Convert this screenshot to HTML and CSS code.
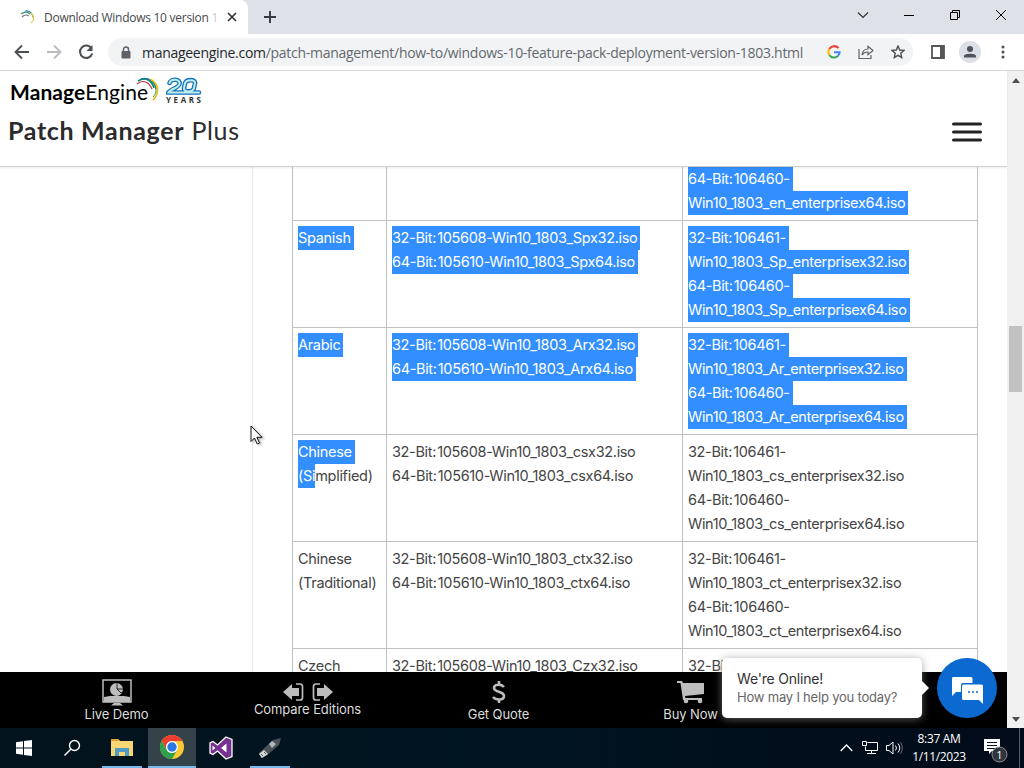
FILE: index.html
```html
<!DOCTYPE html>
<html lang="en">
<head>
    <meta charset="UTF-8">
    <title>Download Windows 10 version 1</title>
    <link rel="stylesheet" href="styles.css">
</head>
<body>
    <!-- TAB STRIP -->
    <div class="tabs">
        <div class="tab">
            <svg width="16" height="16" viewBox="0 0 16 16" fill="none" stroke-width="1.2"><path d="M1 5c4-3 7-2 9 0" stroke="#388e75"/><path d="M2 8c3-3 5-2 7-1" stroke="#777"/><path d="M5 2c5-1 7 2 8 6" stroke="#2c8a91"/><path d="M11 4c4 4 3 8 0 10" stroke="#e5cb43"/></svg>
            <span class="tab-title">Download Windows 10 version <i>1</i></span>
            <svg class="tab-close" width="10" height="10" viewBox="0 0 10 10" stroke="#333" stroke-width="1.7"><path d="M1 1l8 8M9 1l-8 8"/></svg>
        </div>
        <svg class="new-tab" width="12" height="12" viewBox="0 0 12 12" stroke="#333a44" stroke-width="1.9"><path d="M6 0v12M0 6h12"/></svg>
        <div class="window-buttons">
            <svg width="12" height="12" viewBox="0 0 12 12" fill="none" stroke="#333" stroke-width="1.2"><path d="M1 3.500l5 5 5-5"/></svg>
            <svg width="12" height="12" viewBox="0 0 12 12" fill="none" stroke="#000"><path d="M1 6.500h10"/></svg>
            <svg width="12" height="12" viewBox="0 0 12 12" fill="none" stroke="#000"><path d="M1.500 3.500h7v7h-7zM3.500 3v-1.500h7v7h-1.500"/></svg>
            <svg width="12" height="12" viewBox="0 0 12 12" fill="none" stroke="#000"><path d="M1 1l10 10M11 1L1 11"/></svg>
        </div>
    </div>

    <!-- TOOLBAR -->
    <div class="toolbar">
        <svg width="16" height="16" viewBox="0 0 16 16" fill="none" stroke="#4b4e52" stroke-width="1.800"><path d="M15 8H2M8 1.500L1.500 8 8 14.500"/></svg>
        <svg class="forward" width="16" height="16" viewBox="0 0 16 16" fill="none" stroke="#b9bbbe" stroke-width="1.800"><path d="M1 8h13M8 1.500L14.500 8 8 14.500"/></svg>
        <svg class="reload" width="16" height="16" viewBox="0 0 16 16" fill="none" stroke="#4b4e52" stroke-width="2"><path d="M13.500 4.500A6.200 6.200 0 1 0 14.200 9.500"/><path d="M14.500 1v6h-6z" fill="#4b4e52" stroke="none"/></svg>
        <div class="address">
            <svg width="10" height="13" viewBox="0 0 10 13"><path d="M2.500 6V3.500a2.500 2.500 0 0 1 5 0V6" fill="none" stroke="#5f6368" stroke-width="1.500"/><rect x="0.500" y="5" width="9" height="7.500" rx="1" fill="#5f6368"/></svg>
            <span class="url"><b>manageengine.com</b>/patch-management/how-to/windows-10-feature-pack-deployment-version-1803.html</span>
            <div class="address-icons">
                <svg width="14" height="14" viewBox="0 0 14 14" fill="none" stroke-width="2.100"><path d="M11.500 3.200A5.600 5.600 0 0 0 2.300 4" stroke="#ea4335"/><path d="M2.300 4a5.600 5.600 0 0 0 0 6" stroke="#fbbc05"/><path d="M2.300 10a5.600 5.600 0 0 0 8.500 1" stroke="#34a853"/><path d="M10.800 11q2-1.700 1.800-3.800H7" stroke="#4285f4"/></svg>
                <svg width="16" height="16" viewBox="0 0 16 16" fill="none" stroke="#5f6368" stroke-width="1.200"><path d="M1 5v9.500h12V11M4 11c.5-4 2.500-6 6-6V2.200l5 4.300-5 4.200V8c-2.500 0-4.500.8-6 3z"/></svg>
                <svg width="14" height="14" viewBox="0 0 14 14" fill="none" stroke="#4b4e52" stroke-width="1.400"><path d="M7 1l1.700 4 4.300.4-3.200 2.900.9 4.300L7 10.400l-3.700 2.200.9-4.300L1 5.400 5.300 5z"/></svg>
            </div>
        </div>
        <svg class="panel-icon" width="14" height="14" viewBox="0 0 14 14"><path d="M1 1h12v12H1z" fill="none" stroke="#55565a" stroke-width="1.800"/><path d="M9 1h4v12H9z" fill="#55565a"/></svg>
        <svg class="avatar" width="22" height="22" viewBox="0 0 22 22"><circle cx="11" cy="11" r="11" fill="#dcdfe6"/><circle cx="11" cy="8" r="3" fill="#4f545c"/><path d="M5 16.500v-1.500c0-3 12-3 12 0v1.500z" fill="#4f545c"/></svg>
        <svg width="4" height="14" viewBox="0 0 4 14" fill="#4b4e52"><circle cx="2" cy="2" r="1.500"/><circle cx="2" cy="7" r="1.500"/><circle cx="2" cy="12" r="1.500"/></svg>
    </div>

    <!-- WEB PAGE -->
    <div class="viewport">
        <div class="page">
            <header class="site-header">
                <div class="logo-row">
                    <span class="brand"><b>Manage</b>Engine</span>
                    <svg class="swoosh" width="24" height="24" viewBox="0 0 24 24" fill="none" stroke-width="1.600"><path d="M1 7C7 2 13 5 16 12" stroke="#c02b43" stroke-width="1.200"/><path d="M2 4C10-1 16 4 18 11" stroke="#16835c"/><path d="M5 2c8-2 14 3 15 10" stroke="#1678a5"/><path d="M14 2c10 5 9 15 3 21" stroke="#e4c51c" stroke-width="1.800"/><path d="M17 5c4 6 4 11 0 15" stroke="#3b9c57" stroke-width="1"/></svg>
                    <svg class="twenty" width="36" height="29" viewBox="0 0 36 29"><g fill="none" stroke-linecap="round"><path d="M3.500 6C4.500 1.500 15 1.500 13.500 7c-1 4-9 5-11 8.500H33M18 11l1-4.500C20 2 30 2 29 6.500l-1 4.500c-1 4.500-11 4.500-10 0z" stroke="#1674bd" stroke-width="4.600"/><path d="M3.500 6C4.500 1.500 15 1.500 13.500 7c-1 4-9 5-11 8.500H33M18 11l1-4.500C20 2 30 2 29 6.500l-1 4.500c-1 4.500-11 4.500-10 0z" stroke="#bfeef0" stroke-width="2"/></g><text class="years" x="0" y="25.500" textLength="35">YEARS</text></svg>
                </div>
                <div class="product-row">
                    <h1><b>Patch Manager</b> Plus</h1>
                    <svg width="30" height="20" viewBox="0 0 30 20" stroke="#222" stroke-width="3" stroke-linecap="round"><path d="M1.500 2h27M1.500 10h27M1.500 18h27"/></svg>
                </div>
            </header>

            <main class="content">
                <div class="side"></div>
                <table>
                    <tr>
                        <td></td>
                        <td></td>
                        <td class="continued"><p><mark>64-Bit: 106460-</mark></p><p><mark>Win10_1803_en_enterprisex64.iso</mark></p></td>
                    </tr>
                    <tr>
                        <td><p><mark>Spanish</mark></p></td>
                        <td><p><mark>32-Bit: 105608-Win10_1803_Spx32.iso</mark></p><p><mark>64-Bit: 105610-Win10_1803_Spx64.iso</mark></p></td>
                        <td><p><mark>32-Bit: 106461-</mark></p><p><mark>Win10_1803_Sp_enterprisex32.iso</mark></p><p><mark>64-Bit: 106460-</mark></p><p><mark>Win10_1803_Sp_enterprisex64.iso</mark></p></td>
                    </tr>
                    <tr>
                        <td><p><mark>Arabic</mark></p></td>
                        <td><p><mark>32-Bit: 105608-Win10_1803_Arx32.iso</mark></p><p><mark>64-Bit: 105610-Win10_1803_Arx64.iso</mark></p></td>
                        <td><p><mark>32-Bit: 106461-</mark></p><p><mark>Win10_1803_Ar_enterprisex32.iso</mark></p><p><mark>64-Bit: 106460-</mark></p><p><mark>Win10_1803_Ar_enterprisex64.iso</mark></p></td>
                    </tr>
                    <tr>
                        <td><p><mark>Chinese</mark></p><p><mark class="partial">(Si</mark>mplified)</p></td>
                        <td><p>32-Bit: 105608-Win10_1803_csx32.iso</p><p>64-Bit: 105610-Win10_1803_csx64.iso</p></td>
                        <td><p>32-Bit: 106461-</p><p>Win10_1803_cs_enterprisex32.iso</p><p>64-Bit: 106460-</p><p>Win10_1803_cs_enterprisex64.iso</p></td>
                    </tr>
                    <tr>
                        <td><p>Chinese</p><p>(Traditional)</p></td>
                        <td><p>32-Bit: 105608-Win10_1803_ctx32.iso</p><p>64-Bit: 105610-Win10_1803_ctx64.iso</p></td>
                        <td><p>32-Bit: 106461-</p><p>Win10_1803_ct_enterprisex32.iso</p><p>64-Bit: 106460-</p><p>Win10_1803_ct_enterprisex64.iso</p></td>
                    </tr>
                    <tr>
                        <td><p>Czech</p></td>
                        <td><p>32-Bit: 105608-Win10_1803_Czx32.iso</p></td>
                        <td><p>32-Bit</p></td>
                    </tr>
                </table>
            </main>

            <nav class="bottom-bar">
                <a class="live">
                    <svg width="30" height="27" viewBox="0 0 30 27"><path d="M1 1h28v22H1z" fill="none" stroke="#bdbdbd" stroke-width="1.500"/><path d="M2 18l6-1h14l6 1v5H2zM12 24h6l3 2.500H9z" fill="#bdbdbd"/><circle cx="14.500" cy="10.500" r="6.500" fill="#bdbdbd"/><path d="M15 3v7l4 4 2-1M15 10h7" fill="none" stroke="#000" stroke-width=".8"/></svg>
                    <span>Live Demo</span>
                </a>
                <a class="compare">
                    <svg width="50" height="20" viewBox="0 0 50 20" fill="#bdbdbd"><path d="M0 10l9-8v4h7v8H9v4zM50 10l-9-8v4h-7v8h7v4z"/><path d="M13 2h4q2.500 0 2.500 2.500v11Q19.500 18 17 18h-4M37 2h-4q-2.500 0-2.500 2.500v11Q30.500 18 33 18h4" fill="none" stroke="#bdbdbd" stroke-width="1.700"/></svg>
                    <span>Compare Editions</span>
                </a>
                <a class="quote">
                    <svg width="14" height="24" viewBox="0 0 14 24" fill="none" stroke="#bdbdbd" stroke-width="2.600"><path d="M12 7C9 3.500 2 4 2 8c0 4.500 10 3 10 8 0 4.500-8 4.500-11 1M7 1v4M7 19v4"/></svg>
                    <span>Get Quote</span>
                </a>
                <a class="buy">
                    <svg width="28" height="24" viewBox="0 0 28 24" fill="#bdbdbd"><path d="M0 1h5l1 2h21v11L8 16l.5 2H25v2H6L3.500 3H0z"/><circle cx="9" cy="21" r="2.300"/><circle cx="23" cy="21" r="2.300"/></svg>
                    <span>Buy Now</span>
                </a>
            </nav>

            <div class="chat-tip">
                <p class="chat-title">We're Online!</p>
                <p class="chat-text">How may I help you today?</p>
            </div>
            <div class="chat-button">
                <svg width="32" height="28" viewBox="0 0 32 28" fill="#fff"><path d="M2 1h18q1.500 0 1.500 1.500V7H12q-2 0-2 2v7H5l-4 4V2.500Q1 1 2 1z"/><path d="M12.500 8.500h18q1.500 0 1.500 1.500v18l-4-4H12.500Q11 24 11 22.500V10q0-1.500 1.500-1.500z"/><path d="M17 16h2M21 16h2M25 16h2" stroke="#0b69cf" stroke-width="1.500"/></svg>
            </div>
            <svg class="cursor" width="14" height="21" viewBox="0 0 14 21"><path d="M1 1v15.500l3.500-3.500 2.800 6 2.200-1-2.700-5.700H12z" fill="#fff" stroke="#111"/></svg>
        </div>
        <div class="scrollbar">
            <svg width="8" height="5" viewBox="0 0 8 5"><path d="M0 5l4-5 4 5z" fill="#505050"/></svg>
            <div class="thumb"></div>
            <svg width="8" height="5" viewBox="0 0 8 5"><path d="M0 0l4 5 4-5z" fill="#505050"/></svg>
        </div>
    </div>

    <!-- TASKBAR -->
    <div class="taskbar">
        <div class="task"><svg width="16" height="16" viewBox="0 0 16 16" fill="#fff"><path d="M0 2.300l7-1v6.200H0zM8 1.100L16 0v7.500H8zM0 8.500h7v6.200l-7-1zM8 8.500h8V16l-8-1.100z"/></svg></div>
        <div class="task search"><svg width="18" height="18" viewBox="0 0 18 18" fill="none" stroke="#fff" stroke-width="1.400"><circle cx="11.500" cy="6.500" r="5"/><path d="M8 10l-6.500 6.500"/></svg></div>
        <div class="task open folder">
            <svg width="22" height="20" viewBox="0 0 22 20"><path d="M0 1h7l2 2h13v15H0z" fill="#f7d673"/><path d="M0 1h7l2 2H0z" fill="#dba22e"/><path d="M4 18V10h14v8h-4v-4H8v4z" fill="#4e9cc4"/></svg>
        </div>
        <div class="task active">
            <svg width="24" height="24" viewBox="0 0 24 24"><circle cx="12" cy="12" r="12" fill="#fcc934"/><path d="M1.600 6A12 12 0 0 1 22.400 6H12a6 6 0 0 0-5.200 9z" fill="#ea3f31"/><path d="M1.600 6A12 12 0 0 0 12 24l5.200-9a6 6 0 0 1-10.400 0z" fill="#2da04d"/><circle cx="12" cy="12" r="6" fill="#fff"/><circle cx="12" cy="12" r="4.700" fill="#2b78e4"/></svg>
        </div>
        <div class="task">
            <svg width="24" height="24" viewBox="0 0 24 24"><path d="M17 1l6 2.500v17L17 23 8.500 15 4 18.500 1 17V7l3-1.500L8.500 9z" fill="#74318f" stroke="#fff" stroke-width="1.300"/><path d="M17.500 7.500v9L12 12zM3.500 9.500v5L6.300 12z" fill="#fff"/></svg>
        </div>
        <div class="task open">
            <svg width="24" height="24" viewBox="0 0 24 24"><path d="M1 17L15 4l8-2-2 7L8 20l-5 2z" fill="#4b5358"/><path d="M11 8l3-3 4 3-4 4z" fill="#aeb7bb"/><path d="M1 18l5-4 4 4-6 4z" fill="#d5d8d8"/><path d="M3 18l2 2M6 16l2 2" stroke="#555"/></svg>
        </div>
        <div class="tray">
            <svg width="13" height="8" viewBox="0 0 13 8" fill="none" stroke="#fff" stroke-width="1.300"><path d="M.7 7l5.800-6 5.800 6"/></svg>
            <svg class="network" width="17" height="14" viewBox="0 0 17 14" fill="none" stroke="#fff"><path d="M5.500 1.500h10v8h-12V5.500M.5.500h4v4h-4zM9.500 9.500v3M5 12.500h9"/></svg>
            <svg class="volume" width="17" height="14" viewBox="0 0 17 14" fill="none" stroke="#fff"><path d="M.5 4.500h2.500l4-3.500v12L3 9.500H.5zM9.500 4.500q2 2.500 0 5M12 2.500q3.500 4.500 0 9"/><path d="M14.500 1q3.500 6 0 12" stroke="#667"/></svg>
            <div class="clock"><div>8:37 AM</div><div class="date">1/11/2023</div></div>
            <svg class="notify" width="25" height="25" viewBox="0 0 25 25"><path d="M1 1h16v12H9l-3 3v-3H1z" fill="#fff"/><path d="M4 4.500h10M4 7.500h10M4 10.500h10" stroke="#07131f"/><circle cx="16.500" cy="16.500" r="7.500" fill="#30353b" stroke="#8b8f94"/><text class="badge" x="16.500" y="20.500" text-anchor="middle">1</text></svg>
            <div class="show-desktop"></div>
        </div>
    </div>
</body>
</html>
```

FILE: styles.css
```css
* {
    box-sizing: border-box;
}
body {
    margin: 0;
    width: 1024px;
    height: 768px;
    overflow: hidden;
    font-family: Inter, Arial, sans-serif;
    background: #fff;
}
svg {
    display: block;
    flex: none;
}
p, h1 {
    margin: 0;
}

/* browser */
.tabs {
    display: flex;
    align-items: center;
    height: 34px;
    background: #dee1e7;
}
.tab {
    display: flex;
    align-items: center;
    width: 248px;
    height: 34px;
    padding-left: 20px;
    background: #fff;
    border-radius: 0 8px 0 0;
}
.tab-title {
    width: 173px;
    margin-left: 8px;
    white-space: nowrap;
    font: 12px "Open Sans", sans-serif;
    letter-spacing: -0.27px;
    color: #45484c;
}
.tab-title i {
    font-style: normal;
    color: #ccc;
}
.tab-close {
    margin-left: 10px;
}
.new-tab {
    margin-left: 16px;
}
.window-buttons {
    display: flex;
    gap: 34px;
    margin: -5px 17px 0 auto;
}
.toolbar {
    display: flex;
    align-items: center;
    height: 37px;
    padding-left: 14px;
    background: #fff;
    border-bottom: 1px solid #d5d7da;
}
.forward {
    margin-left: 16px;
}
.reload {
    margin-left: 16px;
}
.address {
    display: flex;
    align-items: center;
    width: 805px;
    height: 28px;
    margin-left: 14px;
    padding-left: 13px;
    border-radius: 14px;
    background: #f1f3f4;
}
.url {
    margin-left: 11px;
    white-space: nowrap;
    font: 14px "Open Sans", sans-serif;
    letter-spacing: -0.29px;
    color: #65696e;
}
.url b {
    font-weight: 400;
    color: #25282b;
}
.address-icons {
    display: flex;
    align-items: center;
    gap: 17px;
    margin: 0 8px 0 auto;
}
.panel-icon {
    margin-left: 18px;
}
.avatar {
    margin: 0 20px 0 14px;
}

/* page */
.viewport {
    display: flex;
    height: 657px;
}
.page {
    position: relative;
    display: flex;
    flex-direction: column;
    width: 1007px;
    height: 657px;
}
.site-header {
    position: relative;
    z-index: 1;
    flex: none;
    height: 96px;
    padding: 5px 25px 0 8px;
    background: #fff;
    border-bottom: 1px solid #d0d0d0;
    box-shadow: 0 1px 2px rgba(0, 0, 0, 0.08);
}
.logo-row {
    display: flex;
    height: 34px;
    padding-left: 2px;
}
.brand {
    width: 138px;
    white-space: nowrap;
    font: 21px/32px Lato, sans-serif;
    letter-spacing: 0.08px;
    color: #000;
}
.swoosh {
    margin: 1px 0 0 -12px;
}
.twenty {
    margin: 1px 0 0 6px;
}
.years {
    font: 700 8px "Open Sans", sans-serif;
    fill: #333;
}
.product-row {
    display: flex;
    align-items: center;
    justify-content: space-between;
    height: 44px;
}
.product-row h1 {
    margin-top: -4px;
    font: 25px/40px Lato, sans-serif;
    letter-spacing: 0.68px;
    color: #2b2b2e;
}
.content {
    display: flex;
    align-items: flex-start;
    height: 505px;
    overflow: hidden;
}
.side {
    width: 253px;
    height: 505px;
    border-right: 1px solid #e8e8e8;
}
table {
    width: 686px;
    margin: -54px 0 0 39px;
    table-layout: fixed;
    border-collapse: collapse;
}
td {
    width: 295px;
    height: 107px;
    padding: 5px;
    vertical-align: top;
    border: 1px solid #bfc2c2;
    font-size: 14.5px;
    line-height: 24px;
    letter-spacing: -0.34px;
    word-spacing: -2.5px;
    color: #444;
}
td:first-child {
    width: 94px;
    letter-spacing: -0.3px;
}
td:nth-child(2) {
    width: 296px;
}
td.continued {
    vertical-align: bottom;
}
td p {
    height: 24px;
    white-space: nowrap;
}
mark {
    display: inline-block;
    height: 24px;
    padding-right: 3px;
    background: #338fff;
    color: #fff;
    vertical-align: top;
}
mark.partial {
    padding-right: 0;
}
.bottom-bar {
    display: flex;
    flex: none;
    height: 56px;
    background: #000;
    color: #ddd;
    font-size: 13px;
    letter-spacing: -0.1px;
}
.bottom-bar a {
    display: flex;
    flex-direction: column;
    align-items: center;
    width: 191px;
    white-space: nowrap;
}
.bottom-bar span {
    line-height: 18px;
}
.live {
    margin-left: 21px;
    padding-top: 7px;
}
.live span {
    margin-top: -1px;
}
.compare {
    padding-top: 10px;
}
.compare span {
    margin-top: -2px;
}
.quote {
    padding-top: 8px;
}
.quote span, .buy span {
    margin-top: 1px;
}
.bottom-bar .buy {
    width: 193px;
    padding-top: 8px;
}
.chat-tip {
    position: absolute;
    z-index: 2;
    left: 722px;
    top: 587px;
    width: 200px;
    height: 60px;
    padding: 12px 15px;
    border-radius: 5px;
    background: #fff;
    box-shadow: 0 1px 8px rgba(130, 130, 130, 0.7);
}
.chat-tip::after {
    content: "";
    position: absolute;
    left: 200px;
    top: 23px;
    border: 7px solid transparent;
    border-left-color: #fff;
    border-right: 0;
}
.chat-tip p {
    line-height: 18px;
    letter-spacing: -0.2px;
    white-space: nowrap;
}
.chat-title {
    font-size: 14px;
    color: #333;
}
.chat-text {
    font-size: 13px;
    color: #666;
}
.chat-button {
    position: absolute;
    z-index: 2;
    left: 937px;
    top: 587px;
    display: flex;
    align-items: center;
    justify-content: center;
    width: 60px;
    height: 60px;
    border-radius: 50%;
    background: #0b69cf;
}
.chat-button svg {
    margin-top: 4px;
}
.cursor {
    position: absolute;
    left: 250px;
    top: 354px;
    filter: drop-shadow(2px 1px 1px rgba(0, 0, 0, 0.3));
}
.scrollbar {
    display: flex;
    flex-direction: column;
    align-items: center;
    width: 17px;
    padding: 7px 0 6px;
    background: #f0f0f0;
}
.thumb {
    width: 13px;
    height: 66px;
    margin: 243px 0 auto;
    background: #c1c1c1;
}

/* taskbar */
.taskbar {
    display: flex;
    height: 40px;
    background: linear-gradient(to right, #03131d, #001522 45%, #020b19);
}
.task {
    display: flex;
    align-items: center;
    justify-content: center;
    width: 48px;
    height: 40px;
    margin-right: 1px;
}
.task:first-child {
    margin-right: 0;
}
.search, .folder {
    margin-right: 2px;
}
.open {
    background: linear-gradient(#76b9ed, #76b9ed) center bottom / 40px 2px no-repeat;
}
.active {
    background: #34434a;
    border-bottom: 2px solid #76b9ed;
}
.tray {
    display: flex;
    align-items: center;
    margin-left: auto;
}
.tray .network {
    margin-left: 9px;
}
.tray .volume {
    margin: 0 8px 0 7px;
}
.clock {
    width: 56px;
    font: 12px/18px "Open Sans", sans-serif;
    letter-spacing: -0.35px;
    color: #fff;
    text-align: center;
    white-space: nowrap;
}
.tray .notify {
    margin: 5px 11px 0 16px;
}
.badge {
    font: 11px "Open Sans", sans-serif;
    fill: #fff;
}
.show-desktop {
    width: 5px;
    height: 40px;
    border-left: 1px solid #53606a;
}
```
